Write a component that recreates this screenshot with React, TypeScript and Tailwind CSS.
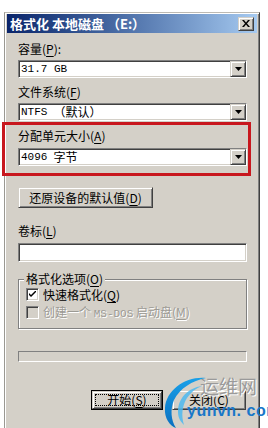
import React from "react";

const sunken =
  "border border-t-[#808080] border-l-[#808080] border-b-white border-r-white shadow-[inset_1px_1px_0_#404040,inset_-1px_-1px_0_#d4d0c8]";
const raised =
  "border border-t-[#d4d0c8] border-l-[#d4d0c8] border-b-[#404040] border-r-[#404040] shadow-[inset_1px_1px_0_#ffffff,inset_-1px_-1px_0_#808080]";

function Acc({ c }: { c: string }) {
  return (
    <span>
      (<span className="underline underline-offset-2">{c}</span>)
    </span>
  );
}

function Arrow() {
  return (
    <div className={`${raised} w-[16px] h-full bg-[#d4d0c8] flex items-center justify-center shrink-0`}>
      <svg width="7" height="4" viewBox="0 0 7 4">
        <path d="M0 0H7L3.5 4Z" fill="#000" />
      </svg>
    </div>
  );
}

function Combo({ children }: { children: React.ReactNode }) {
  return (
    <div className={`${sunken} h-[18px] bg-white flex items-stretch`}>
      <div className="flex-1 flex items-center gap-[6px] pl-[2px] text-[11px] leading-none font-['Liberation_Mono','Noto_Sans_CJK_SC',monospace] text-black whitespace-nowrap">
        {children}
      </div>
      <Arrow />
    </div>
  );
}

export default function App() {
  return (
    <div className="relative w-[268px] h-[428px] bg-white overflow-hidden font-['Noto_Sans_CJK_SC',sans-serif] text-[12px] text-black">
      <div className="pt-[12px] pl-[4px]">
        <div className="w-[256px] h-[430px] bg-[#d4d0c8] border border-t-[#bdbab3] border-l-[#9a9892] border-r-[#404040] shadow-[inset_1px_1px_0_#ffffff,inset_-1px_0_0_#808080] p-[2px] pt-[1px] flex flex-col">
          {/* title bar */}
          <div className="h-[19px] bg-gradient-to-r from-[#0a246a] to-[#a6caf0] flex items-center pl-[3px] pr-[3px]">
            <div className="flex-1 text-white font-bold text-[13px] leading-none whitespace-nowrap">
              格式化 本地磁盘 （E:）
            </div>
            <div className={`${raised} w-[16px] h-[14px] bg-[#d4d0c8] flex items-center justify-center`}>
              <svg width="8" height="7" viewBox="0 0 8 7">
                <path d="M0 0H2L4 2.5L6 0H8L5 3.5L8 7H6L4 4.5L2 7H0L3 3.5Z" fill="#000" />
              </svg>
            </div>
          </div>

          {/* content */}
          <div className="pl-[11px] pr-[10px] flex flex-col">
            <div className="mt-[9px] h-[14px] leading-[14px]">
              容量<Acc c="P" />:
            </div>
            <div className="mt-[4px]">
              <Combo>
                <span>31.7 GB</span>
              </Combo>
            </div>
            <div className="mt-[7px] h-[14px] leading-[14px]">
              文件系统<Acc c="F" />
            </div>
            <div className="mt-[4px]">
              <Combo>
                <span>NTFS</span>
                <span className="text-[12px] font-['Noto_Sans_CJK_SC',sans-serif]">（默认）</span>
              </Combo>
            </div>
            <div className="mt-[8px] h-[14px] leading-[14px]">
              分配单元大小<Acc c="A" />
            </div>
            <div className="mt-[5px]">
              <Combo>
                <span>4096</span>
                <span className="text-[12px] font-['Noto_Sans_CJK_SC',sans-serif]">字节</span>
              </Combo>
            </div>

            <div className={`${raised} mt-[21px] w-[135px] h-[21px] flex items-center justify-center`}>
              还原设备的默认值<Acc c="D" />
            </div>

            <div className="mt-[16px] h-[14px] leading-[14px]">
              卷标<Acc c="L" />
            </div>
            <div className={`${sunken} mt-[5px] h-[19px] bg-white`} />

            {/* group box */}
            <div className="mt-[10px] relative">
              <div className="h-[14px] leading-[14px] flex">
                <span className="ml-[6px] px-[2px] bg-[#d4d0c8] relative z-10">格式化选项<Acc c="O" /></span>
              </div>
              <div className="absolute left-0 right-0 top-[7px] h-[50px] border border-[#808080] shadow-[1px_1px_0_#ffffff,inset_1px_1px_0_#ffffff]" />
              <div className="relative pl-[8px] pt-[2px] flex flex-col gap-[5px] h-[50px]">
                <div className="flex items-center gap-[4px] h-[13px]">
                  <div className={`${sunken} w-[13px] h-[13px] bg-white flex items-center justify-center`}>
                    <svg width="7" height="7" viewBox="0 0 7 7">
                      <path d="M0 2V4L2 6L7 1V-1L2 4Z" fill="#000" />
                    </svg>
                  </div>
                  <span className="leading-[13px]">快速格式化<Acc c="Q" /></span>
                </div>
                <div className="flex items-center gap-[4px] h-[13px]">
                  <div className={`${sunken} w-[13px] h-[13px] bg-[#d4d0c8]`} />
                  <span className="leading-[13px] text-[#9c9a94] [text-shadow:1px_1px_0_#ffffff] whitespace-nowrap">
                    创建一个 <span className="font-['Liberation_Mono',monospace] text-[11px]">MS-DOS</span> 启动盘<Acc c="M" />
                  </span>
                </div>
              </div>
            </div>

            {/* progress */}
            <div className="mt-[15px] h-[11px] border border-t-[#808080] border-l-[#808080] border-b-white border-r-white" />

            {/* buttons */}
            <div className="mt-[28px] flex justify-end gap-[9px] pr-[1px]">
              <div className="w-[72px] h-[20px] border border-black">
                <div className={`${raised} w-full h-full p-[2px]`}>
                  <div className="w-full h-full border border-dotted border-black flex items-center justify-center leading-none">
                    开始<Acc c="S" />
                  </div>
                </div>
              </div>
              <div className={`${raised} w-[74px] h-[20px] flex items-center justify-center leading-none`}>
                关闭<Acc c="C" />
              </div>
            </div>
          </div>
        </div>
      </div>

      {/* red annotation box */}
      <div className="absolute left-[2px] top-[122px] w-[249px] h-[54px] border-[3px] border-[#c8171e]" />

      {/* watermark */}
      <svg className="absolute left-[160px] top-[372px]" width="50" height="56" viewBox="0 0 50 56">
        <defs>
          <linearGradient id="wg" x1="0" y1="0" x2="0" y2="1">
            <stop offset="0" stopColor="#1aa0e8" />
            <stop offset="1" stopColor="#0a6fc0" />
          </linearGradient>
        </defs>
        <path d="M46 6C26 4 6 18 5 36C4 46 10 54 16 56C11 48 10 38 14 28C20 16 32 9 46 6Z" fill="url(#wg)" />
        <path d="M42 14C28 16 18 26 18 40C18 46 21 50 24 53C21 44 22 34 27 26C31 20 36 16 42 14Z" fill="#4cb8f0" opacity="0.85" />
      </svg>
      <div className="absolute left-[200px] top-[376px] text-[19px] leading-none text-[#9a9a9a] font-['Noto_Sans_CJK_SC',sans-serif] [text-shadow:1px_1px_0_#ffffff] whitespace-nowrap">
        运维网
      </div>
      <div className="absolute left-[187px] top-[403px] text-[16px] leading-none font-bold text-[#1877c9] font-['Liberation_Sans',sans-serif] tracking-[0.5px] whitespace-nowrap">
        yunvn. com
      </div>
    </div>
  );
}
